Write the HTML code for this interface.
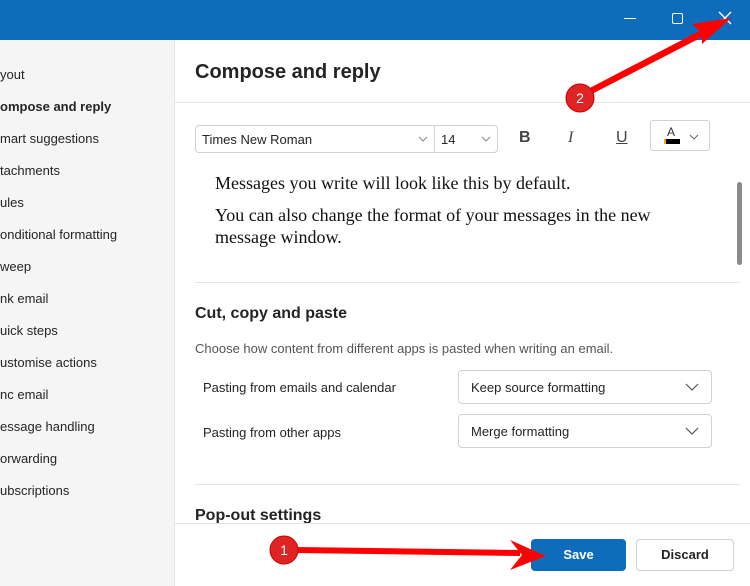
<!DOCTYPE html>
<html><head><style>
*{margin:0;padding:0;box-sizing:border-box}
body{width:750px;height:586px;overflow:hidden;font-family:"Liberation Sans",sans-serif;background:#fff;position:relative}
.top{position:absolute;left:0;top:0;width:750px;height:40px;background:#0f6cbd}
.side{position:absolute;left:0;top:40px;width:175px;height:546px;background:#f5f5f5;border-right:1px solid #e5e5e5}
.side div{position:absolute;left:0;font-size:13px;color:#242424}
.a{position:absolute}
.h{font-size:20px;color:#242424;font-weight:bold}
.sec{font-size:16px;color:#242424;font-weight:bold}
.sel{position:absolute;border:1px solid #d1d1d1;border-radius:4px;font-size:13px;color:#242424;padding:0 12px;display:flex;align-items:center;justify-content:space-between}
.line{position:absolute;height:1px;background:#e5e5e5}
</style></head><body>
<div class="top">
<div class="a" style="left:624px;top:18px;width:12px;height:1px;background:#fff"></div>
<div class="a" style="left:672px;top:13px;width:11px;height:11px;border:1.5px solid #fff;border-radius:2px"></div>
<svg class="a" style="left:718px;top:11px" width="14" height="14"><path d="M1 1L13 13M13 1L1 13" stroke="#fff" stroke-width="1.4"/></svg>
</div>
<div class="side">
<div style="top:27px">yout</div>
<div style="top:59px;font-weight:bold">ompose and reply</div>
<div style="top:91px">mart suggestions</div>
<div style="top:123px">tachments</div>
<div style="top:155px">ules</div>
<div style="top:187px">onditional formatting</div>
<div style="top:219px">weep</div>
<div style="top:251px">nk email</div>
<div style="top:283px">uick steps</div>
<div style="top:315px">ustomise actions</div>
<div style="top:347px">nc email</div>
<div style="top:379px">essage handling</div>
<div style="top:411px">orwarding</div>
<div style="top:443px">ubscriptions</div>
</div>
<div class="a h" style="left:195px;top:61px">Compose and reply</div>
<div class="line" style="left:175px;top:102px;width:575px"></div>
<div class="sel" style="left:195px;top:125px;width:240px;height:28px;border-radius:4px 0 0 4px;padding:0 6px">Times New Roman<svg width="10" height="6"><path d="M1 1L5 5L9 1" stroke="#888" fill="none"/></svg></div>
<div class="sel" style="left:434px;top:125px;width:64px;height:28px;border-radius:0 4px 4px 0;padding:0 6px">14<svg width="10" height="6"><path d="M1 1L5 5L9 1" stroke="#888" fill="none"/></svg></div>
<div class="a" style="left:519px;top:129px;font-weight:bold;font-size:16px;color:#444">B</div>
<div class="a" style="left:568px;top:129px;font-style:italic;font-size:16px;color:#444;font-family:'Liberation Serif'">I</div>
<div class="a" style="left:616px;top:129px;text-decoration:underline;font-size:16px;color:#444">U</div>
<div class="a" style="left:650px;top:120px;width:60px;height:31px;border:1px solid #d1d1d1;border-radius:3px">
<div class="a" style="left:16px;top:4px;font-size:12px;color:#333">A</div>
<div class="a" style="left:13px;top:18px;width:16px;height:5px;background:#000;border-left:2px solid #f7a800"></div>
<svg class="a" style="left:38px;top:13px" width="10" height="6"><path d="M1 1L5 5L9 1" stroke="#666" fill="none"/></svg></div>
<div class="a" style="left:215px;top:172px;font-family:'Liberation Serif',serif;font-size:18px;color:#111;line-height:22px;width:480px">Messages you write will look like this by default.<br><div style="margin-top:10px">You can also change the format of your messages in the new message window.</div></div>
<div class="a" style="left:737px;top:182px;width:5px;height:83px;background:#8a8a8a;border-radius:3px"></div>
<div class="line" style="left:195px;top:282px;width:545px"></div>
<div class="a sec" style="left:195px;top:305px">Cut, copy and paste</div>
<div class="a" style="left:195px;top:341px;font-size:13px;color:#555">Choose how content from different apps is pasted when writing an email.</div>
<div class="a" style="left:203px;top:380px;font-size:13px;color:#242424">Pasting from emails and calendar</div>
<div class="sel" style="left:458px;top:370px;width:254px;height:34px">Keep source formatting<svg width="14" height="8"><path d="M1 1L7 7L13 1" stroke="#555" fill="none" stroke-width="1.2"/></svg></div>
<div class="a" style="left:203px;top:425px;font-size:13px;color:#242424">Pasting from other apps</div>
<div class="sel" style="left:458px;top:414px;width:254px;height:34px">Merge formatting<svg width="14" height="8"><path d="M1 1L7 7L13 1" stroke="#555" fill="none" stroke-width="1.2"/></svg></div>
<div class="line" style="left:195px;top:484px;width:545px"></div>
<div class="a sec" style="left:195px;top:507px">Pop-out settings</div>
<div class="a" style="left:175px;top:523px;width:575px;height:63px;background:#fff;border-top:1px solid #e5e5e5"></div>
<div class="a" style="left:531px;top:539px;width:95px;height:32px;background:#0f6cbd;border-radius:4px;color:#fff;font-weight:bold;font-size:13px;text-align:center;line-height:32px">Save</div>
<div class="a" style="left:636px;top:539px;width:98px;height:32px;border:1px solid #d1d1d1;border-radius:4px;color:#242424;font-weight:bold;font-size:13px;text-align:center;line-height:30px">Discard</div>
<svg class="a" style="left:0;top:0" width="750" height="586">
<polygon points="296,547 520,550 520,556 296,553" fill="#f00"/>
<polygon points="510,540 546,556 510,570 522,555" fill="#f00"/>
<circle cx="284" cy="550" r="14" fill="#e02424" stroke="#c00" stroke-width="1"/>
<text x="284" y="555" fill="#fff" font-size="14" text-anchor="middle" font-family="Liberation Sans">1</text>
<polygon points="588,96 708,34 705,28 584,91" fill="#f00"/>
<polygon points="692,24 731,18 702,44 702,33" fill="#f00"/>
<circle cx="580" cy="98" r="14" fill="#e02424" stroke="#c00" stroke-width="1"/>
<text x="580" y="103" fill="#fff" font-size="14" text-anchor="middle" font-family="Liberation Sans">2</text>
</svg>
</body></html>
